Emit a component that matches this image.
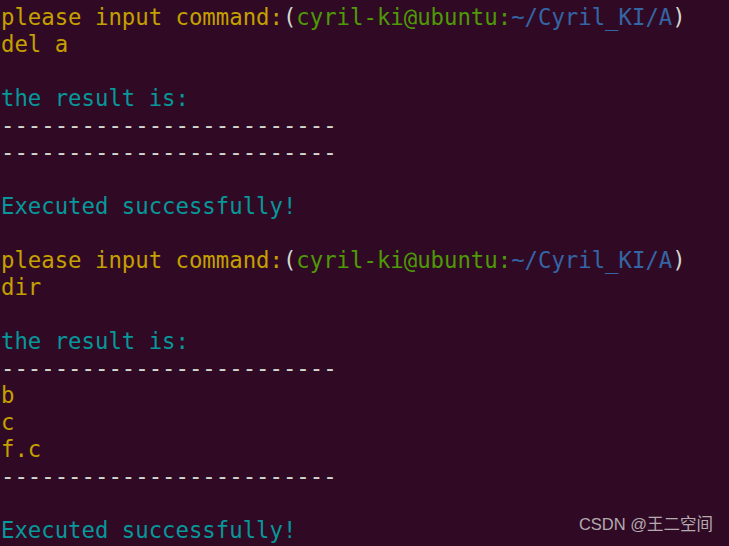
import React from 'react';

const Y = 'text-[#c4a000]';
const G = 'text-[#4e9a06]';
const B = 'text-[#3465a4]';
const C = 'text-[#06989a]';
const W = 'text-[#d3d7cf]';

const dashes = '-------------------------';

function Prompt() {
  return (
    <div className="whitespace-pre">
      <span className={Y}>please input command:</span>
      <span className={W}>(</span>
      <span className={G}>cyril-ki@ubuntu:</span>
      <span className={B}>~/Cyril_KI/A</span>
      <span className={W}>)</span>
    </div>
  );
}

function Line({ text, color }: { text: string; color: string }) {
  return <div className={`whitespace-pre ${color}`}>{text || ' '}</div>;
}

export default function App() {
  return (
    <div className="relative w-[729px] h-[546px] overflow-hidden bg-[#300a24]">
      <div className="pl-[1px] pt-[4px] text-[22.3px] leading-[27px] font-['DejaVu_Sans_Mono',monospace]">
        <Prompt />
        <Line text="del a" color={Y} />
        <Line text="" color={Y} />
        <Line text="the result is:" color={C} />
        <Line text={dashes} color={W} />
        <Line text={dashes} color={W} />
        <Line text="" color={Y} />
        <Line text="Executed successfully!" color={C} />
        <Line text="" color={Y} />
        <Prompt />
        <Line text="dir" color={Y} />
        <Line text="" color={Y} />
        <Line text="the result is:" color={C} />
        <Line text={dashes} color={W} />
        <Line text="b" color={Y} />
        <Line text="c" color={Y} />
        <Line text="f.c" color={Y} />
        <Line text={dashes} color={W} />
        <Line text="" color={Y} />
        <Line text="Executed successfully!" color={C} />
      </div>
      <div className="absolute right-[16px] bottom-[9px] text-[16.5px] text-[#b4aab0] font-['Liberation_Sans','Noto_Sans_CJK_SC',sans-serif]">
        CSDN @王二空间
      </div>
    </div>
  );
}
